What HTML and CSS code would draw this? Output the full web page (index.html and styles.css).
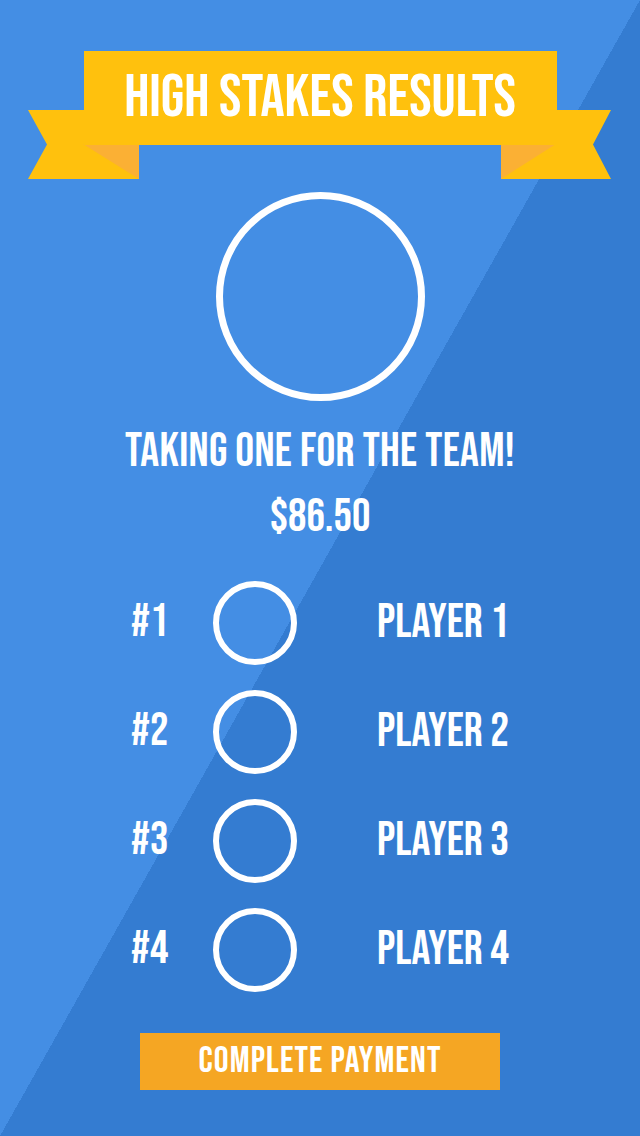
FILE: index.html
```html
<!DOCTYPE html>
<html>
<head>
<meta charset="utf-8">
<title>High Stakes Results</title>
<link rel="stylesheet" href="styles.css">
</head>
<body>
<main class="screen">
  <header class="banner">
    <svg class="banner-art" width="640" height="179" viewBox="0 0 640 179" aria-hidden="true">
      <polygon points="28,110 139,110 139,179 28,179 47,144.5" fill="#ffc10d"/>
      <polygon points="501,110 611,110 593,144.5 611,179 501,179" fill="#ffc10d"/>
      <polygon points="83,144 139,144 139,179" fill="#fbb034"/>
      <polygon points="501,144 556,144 501,179" fill="#fbb034"/>
    </svg>
    <h1 class="banner-title">High Stakes Results</h1>
  </header>

  <div class="avatar-big"></div>

  <p class="tagline">Taking one for the team!</p>
  <p class="amount">$86.50</p>

  <ol class="ranking">
    <li class="rank-row"><span class="rank">#1</span><span class="avatar"></span><span class="player">Player 1</span></li>
    <li class="rank-row"><span class="rank">#2</span><span class="avatar"></span><span class="player">Player 2</span></li>
    <li class="rank-row"><span class="rank">#3</span><span class="avatar"></span><span class="player">Player 3</span></li>
    <li class="rank-row"><span class="rank">#4</span><span class="avatar"></span><span class="player">Player 4</span></li>
  </ol>

  <button class="pay-btn" type="button">Complete Payment</button>
</main>
</body>
</html>
```
FILE: styles.css
```css
html, body {
  margin: 0;
  padding: 0;
}
body {
  width: 640px;
  height: 1136px;
  overflow: hidden;
  font-family: "Bebas Neue", "Oswald", "Roboto Condensed", sans-serif;
  color: #ffffff;
  text-transform: uppercase;
}
.screen {
  width: 640px;
  height: 1136px;
  display: flex;
  flex-direction: column;
  align-items: center;
  background: linear-gradient(to bottom right, #448ee4 50%, #347cd1 50%);
}
.banner {
  position: relative;
  width: 640px;
  height: 179px;
  box-sizing: border-box;
  padding-top: 51px;
  display: flex;
  justify-content: center;
  flex-shrink: 0;
}
.banner-art {
  position: absolute;
  left: 0;
  top: 0;
}
.banner-title {
  position: relative;
  margin: 0;
  width: 473px;
  height: 94px;
  background: #ffc10d;
  font-weight: 400;
  font-size: 60px;
  line-height: 94px;
  text-align: center;
  white-space: nowrap;
}
.avatar-big {
  width: 209px;
  height: 209px;
  box-sizing: border-box;
  border: 7px solid #ffffff;
  border-radius: 50%;
  margin-top: 13px;
  flex-shrink: 0;
}
.tagline {
  margin: 28px 0 0;
  font-size: 47px;
  line-height: 47px;
  letter-spacing: 0.3px;
  white-space: nowrap;
}
.amount {
  margin: 19px 0 0;
  font-size: 46px;
  line-height: 46px;
}
.ranking {
  list-style: none;
  margin: 40px 0 0;
  padding: 0 0 0 131px;
  width: 640px;
  box-sizing: border-box;
  display: flex;
  flex-direction: column;
  gap: 25px;
}
.rank-row {
  display: grid;
  grid-template-columns: 82px 84px auto;
  align-items: center;
  height: 84px;
}
.rank {
  font-size: 46px;
  line-height: 46px;
}
.avatar {
  width: 84px;
  height: 84px;
  box-sizing: border-box;
  border: 6px solid #ffffff;
  border-radius: 50%;
}
.player {
  margin-left: 80px;
  font-size: 47px;
  line-height: 47px;
  white-space: nowrap;
}
.pay-btn {
  margin-top: 41px;
  width: 360px;
  height: 57px;
  border: none;
  padding: 0;
  background: #f5a623;
  color: #ffffff;
  font-family: "Bebas Neue", "Oswald", sans-serif;
  font-size: 37px;
  line-height: 57px;
  letter-spacing: 1.1px;
  text-transform: uppercase;
  flex-shrink: 0;
}
```
